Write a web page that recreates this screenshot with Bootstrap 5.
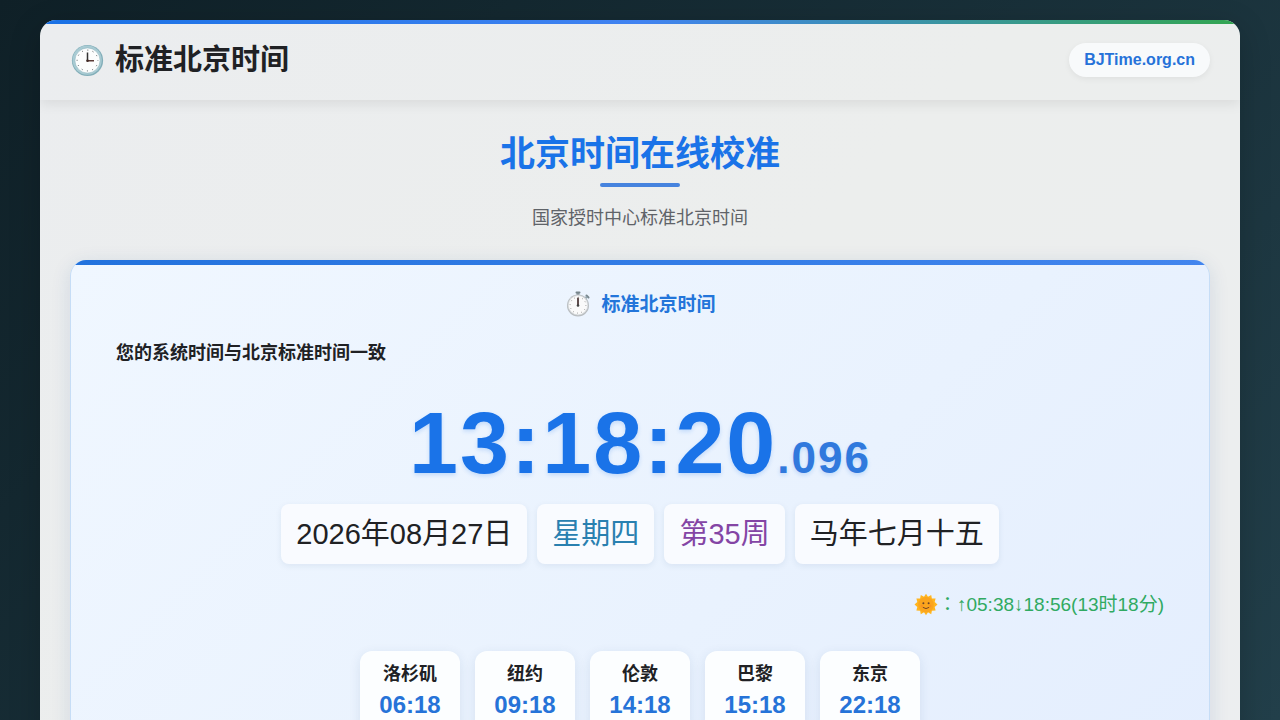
<!DOCTYPE html>
<html lang="zh-CN">
<head>
<meta charset="utf-8">
<meta name="viewport" content="width=device-width, initial-scale=1">
<title>标准北京时间</title>
<link href="https://cdn.jsdelivr.net/npm/bootstrap@5.3.0/dist/css/bootstrap.min.css" rel="stylesheet">
<style>
  :root { --blue: #1a73e8; --ink: #202124; }
  body {
    font-family: "Liberation Sans", "Noto Sans CJK SC", sans-serif;
    color: var(--ink);
    background: linear-gradient(135deg, #0f2027, #223f4a) fixed;
    min-height: 100vh;
    padding: 20px 16px;
  }
  .page-shell {
    max-width: 1200px;
    background: linear-gradient(135deg, #ebedef, #eceeed 50%, #eceef0);
    border-radius: 16px;
    overflow: hidden;
    box-shadow: 0 8px 32px rgba(0, 0, 0, .2);
  }
  .rainbow { height: 4px; background: linear-gradient(90deg, #1a73e8, #4285f4 50%, #34a853); }
  .site-head { padding: 14px 30px 18px; min-height: 76px; box-shadow: 0 4px 12px rgba(0, 0, 0, .08); }
  .site-name { font-size: 29px; line-height: 40px; gap: 10px; }
  .domain {
    font-size: 16px; line-height: 24px; padding: 5px 15px;
    color: #2672d9; background: #f8fafb;
    box-shadow: 0 2px 6px rgba(0, 0, 0, .06);
  }
  .intro { padding: 29px 30px 27px; }
  .intro h1 { font-size: 35px; line-height: 50px; color: var(--blue); }
  .rule { width: 80px; height: 4px; border-radius: 2px; background: #4683de; margin: 4px auto 17px; }
  .intro p { font-size: 18px; line-height: 29px; color: #5f6368; }
  .clock-panel {
    margin: 0 30px 30px;
    border: 1px solid #c6ddf6; border-top: 0; border-radius: 16px; overflow: hidden;
    background: linear-gradient(135deg, #f0f7ff, #e9f2fe 60%, #e4eefe);
    box-shadow: 0 4px 20px rgba(26, 75, 140, .12);
  }
  .panel-bar { height: 5px; background: linear-gradient(90deg, #2272dd, #4285ee); }
  .panel-body { padding: 26px 45px 30px; }
  .panel-title { font-size: 19px; line-height: 28px; color: #2375da; gap: 10px; }
  .status { font-size: 18px; line-height: 28px; margin: 20px 0 30px; }
  .time-now {
    font-size: 88px; line-height: 92px; letter-spacing: 2px; color: var(--blue);
    text-shadow: 0 2px 4px rgba(26, 115, 232, .2);
  }
  .time-now span { font-size: 44px; color: #3079dd; }
  .date-row { gap: 10px; font-size: 29px; line-height: 44px; }
  .date-chip { padding: 8px 15px; background: #f9fbff; border-radius: 8px; box-shadow: 0 2px 6px rgba(30, 70, 120, .08); }
  .weekday { color: #2980b0; }
  .weekno { color: #8445a5; }
  .sun-row { font-size: 19px; line-height: 28px; color: #30aa62; margin: 27px 0 32px; }
  .wide-colon { font-family: "Noto Sans CJK TC", sans-serif; line-height: 1; }
  .city-row { gap: 15px; }
  .city { width: 100px; padding: 9px 0 12px; background: #fcfeff; border-radius: 12px; box-shadow: 0 3px 12px rgba(30, 70, 120, .1); }
  .city-name { font-size: 18px; line-height: 28px; }
  .city-time { font-size: 24px; line-height: 34px; color: #2673d8; }
</style>
</head>
<body>
<div class="page-shell mx-auto">
  <div class="rainbow"></div>
  <header class="site-head d-flex flex-wrap align-items-center justify-content-between">
    <div class="site-name d-flex align-items-center fw-bold">
      <svg width="35" height="35" viewBox="0 0 35 35" aria-hidden="true">
        <circle cx="17.5" cy="17.5" r="15.6" fill="#82aeb9"/>
        <circle cx="17.2" cy="17.1" r="14.6" fill="#a9cbd3"/>
        <circle cx="17.5" cy="17.5" r="12.6" fill="#fcfdfd" stroke="#8db5bf" stroke-width=".6"/>
        <circle cx="17.5" cy="17.5" r="10.4" fill="none" stroke="#4b5356" stroke-width="1" stroke-dasharray="1 4.445" stroke-dashoffset=".5"/>
        <path d="M17.5 9.5v8.3" stroke="#333" stroke-width="1.5"/>
        <path d="M17.5 17.8h6.5" stroke="#5b3a36" stroke-width="1.5"/>
        <circle cx="17.5" cy="17.8" r="1.3" fill="#3e2723"/>
      </svg>
      <span>标准北京时间</span>
    </div>
    <a class="domain rounded-pill fw-bold text-decoration-none" href="#">BJTime.org.cn</a>
  </header>
  <main>
    <section class="intro text-center">
      <h1 class="fw-bold m-0">北京时间在线校准</h1>
      <div class="rule"></div>
      <p class="m-0">国家授时中心标准北京时间</p>
    </section>
    <section class="clock-panel">
      <div class="panel-bar"></div>
      <div class="panel-body">
        <h2 class="panel-title d-flex align-items-center justify-content-center fw-bold m-0">
          <svg width="27" height="28" viewBox="0 0 27 28" aria-hidden="true">
            <path d="M12.5 1h3v4h-3z" fill="#8b999f"/>
            <path d="M12.5 1.500h3M22.500 4.500l2 2" stroke="#78868c" stroke-width="2" stroke-linecap="round"/>
            <path d="M20.500 8.500l2.500-3" stroke="#90a4ae" stroke-width="2"/>
            <circle cx="14" cy="14.5" r="11" fill="#b9bdc0"/>
            <circle cx="14" cy="14.2" r="9.700" fill="#fafafa" stroke="#d8dcde" stroke-width=".8"/>
            <circle cx="14" cy="14.2" r="7.900" fill="none" stroke="#777" stroke-width="1" stroke-dasharray=".7 3.436"/>
            <path d="M13.100 15V7.500L14 6l.9 1.500V15z" fill="#503b3b"/>
            <circle cx="14" cy="14.5" r="1.300" fill="#424242"/>
          </svg>
          <span>标准北京时间</span>
        </h2>
        <div class="status fw-bold">您的系统时间与北京标准时间一致</div>
        <div class="time-now fw-bold text-center">13:18:20<span>.096</span></div>
        <div class="date-row d-flex flex-wrap justify-content-center">
          <div class="date-chip">2026年08月27日</div>
          <div class="date-chip weekday">星期四</div>
          <div class="date-chip weekno">第35周</div>
          <div class="date-chip">马年七月十五</div>
        </div>
        <div class="sun-row d-flex align-items-center justify-content-end">
          <svg width="24" height="24" viewBox="0 0 24 24" aria-hidden="true">
            <path fill="#ffb51f" d="M12 .8l2 3 3.2-1.9.7 3.5 3.7.1-.9 3.5 2.8 2.5-2.8 2.4.9 3.6-3.7.2-.7 3.5-3.2-1.9-2 3-2-3-3.2 1.9-.7-3.5-3.7-.2.9-3.6L.5 11.5l2.8-2.5-.9-3.5 3.7-.1.7-3.5L10 3.8z"/>
            <circle cx="12" cy="11.7" r="7.8" fill="#fba51d"/>
            <circle cx="9.4" cy="10.2" r="1" fill="#6b432a"/>
            <circle cx="14.6" cy="10.2" r="1" fill="#6b432a"/>
            <path d="M8.8 14.3q3.2 2.6 6.4 0" fill="none" stroke="#794525" stroke-width="1"/>
            <circle cx="7.8" cy="13" r="1.2" fill="#fb9422"/>
            <circle cx="16.2" cy="13" r="1.2" fill="#fb9422"/>
          </svg>
          <span><span class="wide-colon" lang="zh-TW">：</span>↑05:38↓18:56(13时18分)</span>
        </div>
        <div class="city-row d-flex flex-wrap justify-content-center text-center fw-bold">
          <div class="city"><div class="city-name">洛杉矶</div><div class="city-time">06:18</div></div>
          <div class="city"><div class="city-name">纽约</div><div class="city-time">09:18</div></div>
          <div class="city"><div class="city-name">伦敦</div><div class="city-time">14:18</div></div>
          <div class="city"><div class="city-name">巴黎</div><div class="city-time">15:18</div></div>
          <div class="city"><div class="city-name">东京</div><div class="city-time">22:18</div></div>
        </div>
      </div>
    </section>
  </main>
</div>
<script src="https://cdn.jsdelivr.net/npm/bootstrap@5.3.0/dist/js/bootstrap.bundle.min.js"></script>
</body>
</html>
